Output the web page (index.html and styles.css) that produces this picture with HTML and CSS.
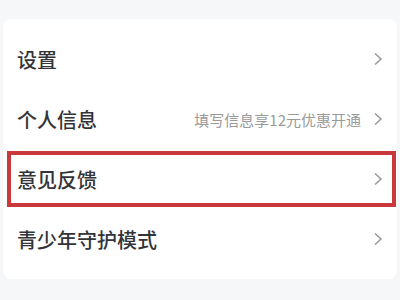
FILE: index.html
```html
<!DOCTYPE html>
<html lang="zh">
<head>
  <meta charset="UTF-8" />
  <title>设置</title>
  <link rel="stylesheet" href="styles.css">
</head>
<body>
  <div class="menu-card">
    <div class="menu-row">
      <span class="menu-label">设置</span>
      <span class="menu-arrow"><svg width="10" height="14" viewBox="0 0 10 14"><path d="M2 1.5 L8 7 L2 12.5" fill="none" stroke="#9a9a9a" stroke-width="1.6"/></svg></span>
    </div>
    <div class="menu-row">
      <span class="menu-label">个人信息</span>
      <span class="menu-hint">填写信息享12元优惠开通</span>
      <span class="menu-arrow"><svg width="10" height="14" viewBox="0 0 10 14"><path d="M2 1.5 L8 7 L2 12.5" fill="none" stroke="#9a9a9a" stroke-width="1.6"/></svg></span>
    </div>
    <div class="menu-row highlight">
      <span class="menu-label">意见反馈</span>
      <span class="menu-arrow"><svg width="10" height="14" viewBox="0 0 10 14"><path d="M2 1.5 L8 7 L2 12.5" fill="none" stroke="#9a9a9a" stroke-width="1.6"/></svg></span>
    </div>
    <div class="menu-row">
      <span class="menu-label">青少年守护模式</span>
      <span class="menu-arrow"><svg width="10" height="14" viewBox="0 0 10 14"><path d="M2 1.5 L8 7 L2 12.5" fill="none" stroke="#9a9a9a" stroke-width="1.6"/></svg></span>
    </div>
  </div>
</body>
</html>
```

FILE: styles.css
```css
body {
  margin: 0;
  padding-top: 19px;
  height: 300px;
  box-sizing: border-box;
  background: #f6f7f9;
  font-family: "Noto Sans CJK SC", "Noto Sans", sans-serif;
  overflow: hidden;
}
.menu-card {
  background: white;
  border-radius: 8px;
  margin: 0 3px;
  padding: 10px 0;
}
.menu-row {
  display: flex;
  align-items: center;
  height: 60px;
  padding: 0 14px 0 14px;
  box-sizing: border-box;
}
.menu-label {
  flex: 1;
  font-size: 20px;
  font-weight: 500;
  color: #333438;
}
.menu-hint {
  font-size: 15px;
  color: #9a9a9a;
  margin-right: 12px;
}
.menu-arrow {
  display: flex;
  align-items: center;
}
.highlight {
  border: 4px solid #c9383b;
  margin: 2px 1px 2px 4px;
  padding: 0 9px 0 6px;
  height: 56px;
}
```
